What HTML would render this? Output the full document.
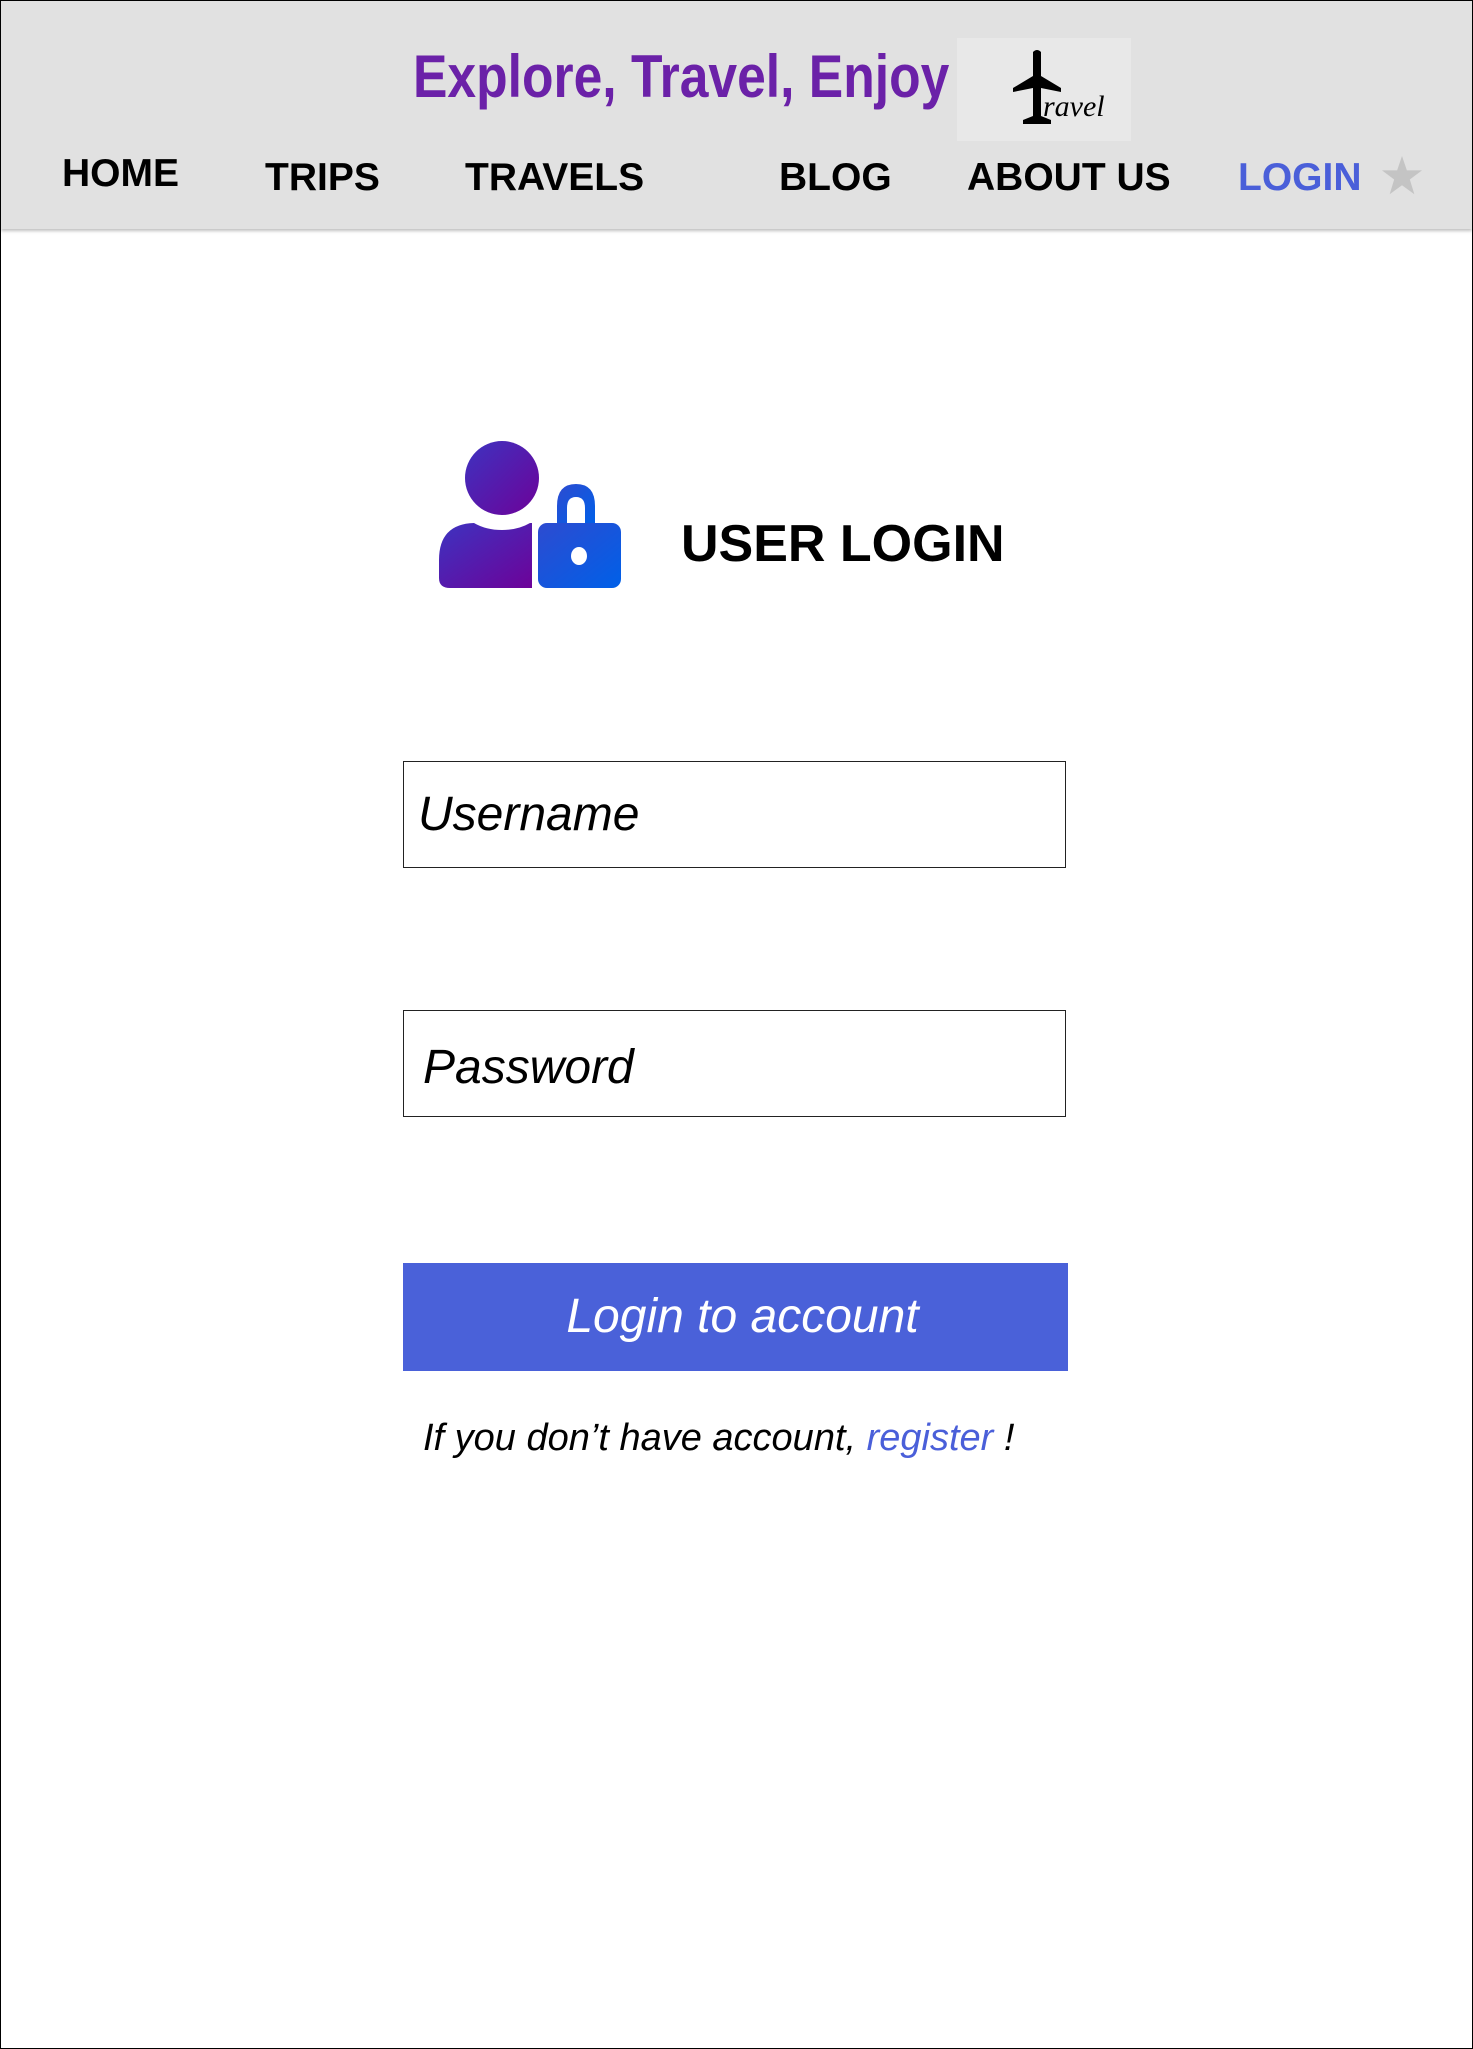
<!DOCTYPE html>
<html><head><meta charset="utf-8">
<style>
html,body{margin:0;padding:0}
body{width:1473px;height:2049px;position:relative;background:#fff;font-family:"Liberation Sans",Arial,sans-serif;overflow:hidden}
.frame{position:absolute;left:0;top:0;width:1471px;height:2047px;border:1px solid #000}
.header{position:absolute;left:1px;top:1px;width:1471px;height:228px;background:#e1e1e1;box-shadow:0 2px 3px rgba(0,0,0,.25)}
.title{position:absolute;left:412px;top:38px;font-weight:bold;font-size:60px;color:#6b21a8;white-space:nowrap;line-height:76px;transform:scaleX(0.86);transform-origin:0 0}
.logo{position:absolute;left:956px;top:37px;width:174px;height:103px;background:#e8e8e8}
.nav{position:absolute;font-weight:bold;font-size:39px;color:#000;white-space:nowrap;line-height:1}
.inp{position:absolute;left:403px;width:663px;border:1px solid #222;box-sizing:border-box;background:#fff}
.inp span{position:absolute;font-style:italic;font-size:48px;color:#000;line-height:1}
</style></head><body>
<div class="frame"></div>
<div class="header">
  <div class="title">Explore, Travel, Enjoy</div>
  <div class="logo">
    <svg width="174" height="103" viewBox="0 0 174 103">
      <path d="M76 14 Q80 10 84 14 L84 38 L104 50 L104 54 L84 50 L84 78 L94 82 L94 86 L66 86 L66 82 L76 78 L76 50 L56 54 L56 50 L76 38 Z" fill="#000"/>
      <text x="86" y="78" font-family="Liberation Serif,serif" font-style="italic" font-size="30" fill="#000">ravel</text>
    </svg>
  </div>
  <div class="nav" style="left:61px;top:153px">HOME</div>
  <div class="nav" style="left:264px;top:157px">TRIPS</div>
  <div class="nav" style="left:464px;top:157px">TRAVELS</div>
  <div class="nav" style="left:778px;top:157px">BLOG</div>
  <div class="nav" style="left:966px;top:157px">ABOUT US</div>
  <div class="nav" style="left:1237px;top:157px;color:#4a5fd9">LOGIN</div>
  <svg style="position:absolute;left:1380px;top:155px" width="42" height="40" viewBox="0 0 24 23"><path d="M12 0 L14.8 8.3 L23.5 8.3 L16.5 13.5 L19.1 22 L12 16.8 L4.9 22 L7.5 13.5 L0.5 8.3 L9.2 8.3 Z" fill="#c4c4c4"/></svg>
</div>

<svg style="position:absolute;left:436px;top:438px" width="190" height="154" viewBox="0 0 190 154">
  <defs>
    <linearGradient id="gp" x1="0" y1="0" x2="1" y2="1"><stop offset="0" stop-color="#3d33c0"/><stop offset="1" stop-color="#6d0299"/></linearGradient>
    <linearGradient id="gl" x1="0" y1="0" x2="1" y2="1"><stop offset="0" stop-color="#2d4bd0"/><stop offset="1" stop-color="#0060e8"/></linearGradient>
  </defs>
  <ellipse cx="66" cy="40" rx="37" ry="37" fill="url(#gp)"/>
  <path d="M38 85 Q50 92 66 92 Q82 92 94 85 L96 85 L96 150 L14 150 Q3 150 3 140 L3 122 Q3 86 38 85 Z" fill="url(#gp)"/>
  <path d="M121 86 L121 68 Q121 46 140 46 Q159 46 159 68 L159 86 L149 86 L149 70 Q149 59 140 59 Q131 59 131 70 L131 86 Z" fill="url(#gl)"/>
  <rect x="102" y="85" width="83" height="65" rx="9" fill="url(#gl)"/>
  <ellipse cx="143" cy="118" rx="8" ry="9" fill="#fff"/>
</svg>
<div style="position:absolute;left:681px;top:514px;font-weight:bold;font-size:52px;line-height:60px;color:#000;white-space:nowrap">USER LOGIN</div>

<div class="inp" style="top:761px;height:107px"><span style="left:14px;top:29px">Username</span></div>
<div class="inp" style="top:1010px;height:107px"><span style="left:19px;top:33px">Password</span></div>
<div style="position:absolute;left:403px;top:1263px;width:665px;height:108px;background:#4a61d9;color:#fff;font-style:italic;font-size:48px;line-height:108px;text-align:center;box-sizing:border-box;padding-left:14px">Login to account</div>
<div style="position:absolute;left:423px;top:1417px;font-style:italic;font-size:38px;line-height:42px;color:#000;white-space:nowrap">If you don’t have account, <span style="color:#4a5fd9">register</span> !</div>
</body></html>
